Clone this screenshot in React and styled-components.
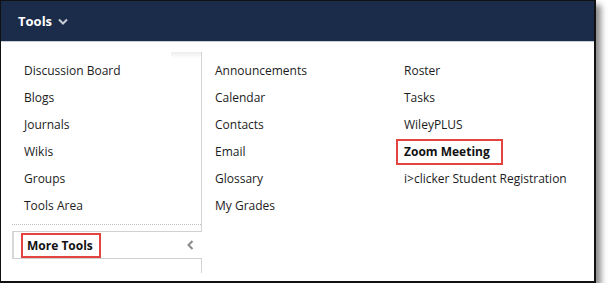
import React from "react";
import styled, { createGlobalStyle } from "styled-components";

const Global = createGlobalStyle`
  html, body { margin: 0; padding: 0; background: #fff; }
  body { font-family: "Open Sans", "Noto Sans", sans-serif; }
`;

const Frame = styled.div`
  width: 593px;
  height: 280px;
  border: 1px solid #111;
  border-right-width: 2px;
  border-bottom-width: 2px;
  background: #fff;
  box-shadow: 5px 5px 6px rgba(0,0,0,0.45);
  display: flex;
  flex-direction: column;
  overflow: hidden;
`;

const Header = styled.div`
  height: 40px;
  background: #1b2b4a;
  border-bottom: 1px solid #c9ccd2;
  display: flex;
  align-items: center;
  padding-left: 17px;
  gap: 6px;
  color: #fff;
  font-weight: 700;
  font-size: 13px;
`;

const Body = styled.div`
  display: flex;
  padding-top: 10px;
`;

const LeftCol = styled.div`
  width: 200px;
  display: flex;
  flex-direction: column;
  border-right: 1px solid #d4d4d4;
  background: linear-gradient(to bottom, #ececec 0px, #fff 6px) no-repeat right top / 30px 100%;
  height: 221px;
  position: relative;
`;

const List = styled.ul`
  list-style: none;
  margin: 0;
  padding: 5px 0 0 0;
  display: flex;
  flex-direction: column;
`;

const Item = styled.li`
  height: 27px;
  line-height: 27px;
  font-size: 12px;
  color: #1c1c1c;
  padding-left: ${p => p.$indent}px;
  white-space: nowrap;
`;

const Divider = styled.div`
  margin: 5px 0 0 11px;
  border-top: 1px dotted #bdbdbd;
`;

const MoreTools = styled.div`
  margin: 6px -1px 0 11px;
  height: 26px;
  border-top: 1px solid #d0d0d0;
  border-bottom: 1px solid #d0d0d0;
  border-left: 2px solid #d8d8d8;
  background: #fff;
  display: flex;
  align-items: center;
  justify-content: space-between;
  padding-left: 7px;
  padding-right: 8px;
  position: relative;
  z-index: 1;
`;

const Boxed = styled.span`
  display: inline-block;
  border: 2px solid #e2453f;
  padding: ${p => p.$pad};
  font-weight: 700;
  font-size: 12px;
  color: #111;
  line-height: 19px;
`;

const Col = styled.div`
  width: ${p => p.$w}px;
`;

const Chev = styled.svg`
  display: block;
`;

export default function App() {
  const left = ["Discussion Board", "Blogs", "Journals", "Wikis", "Groups", "Tools Area"];
  const mid = ["Announcements", "Calendar", "Contacts", "Email", "Glossary", "My Grades"];
  return (
    <>
      <Global />
      <Frame>
        <Header>
          <span>Tools</span>
          <Chev width="10" height="7" viewBox="0 0 10 7">
            <path d="M1 1.5 L5 5.5 L9 1.5" stroke="#c8ccd4" strokeWidth="2" fill="none" />
          </Chev>
        </Header>
        <Body>
          <LeftCol>
            <List>
              {left.map(t => <Item key={t} $indent={23}>{t}</Item>)}
            </List>
            <Divider />
            <MoreTools>
              <Boxed $pad="1px 6px 1px 4px">More Tools</Boxed>
              <Chev width="7" height="10" viewBox="0 0 7 10">
                <path d="M5.5 1 L1.5 5 L5.5 9" stroke="#8a8a8a" strokeWidth="2" fill="none" />
              </Chev>
            </MoreTools>
          </LeftCol>
          <Col $w={189}>
            <List>
              {mid.map(t => <Item key={t} $indent={13}>{t}</Item>)}
            </List>
          </Col>
          <Col $w={200}>
            <List>
              <Item $indent={13}>Roster</Item>
              <Item $indent={13}>Tasks</Item>
              <Item $indent={13}>WileyPLUS</Item>
              <Item $indent={5}><Boxed $pad="1px 11px 2px 6px">Zoom Meeting</Boxed></Item>
              <Item $indent={13}>i&gt;clicker Student Registration</Item>
            </List>
          </Col>
        </Body>
      </Frame>
    </>
  );
}
